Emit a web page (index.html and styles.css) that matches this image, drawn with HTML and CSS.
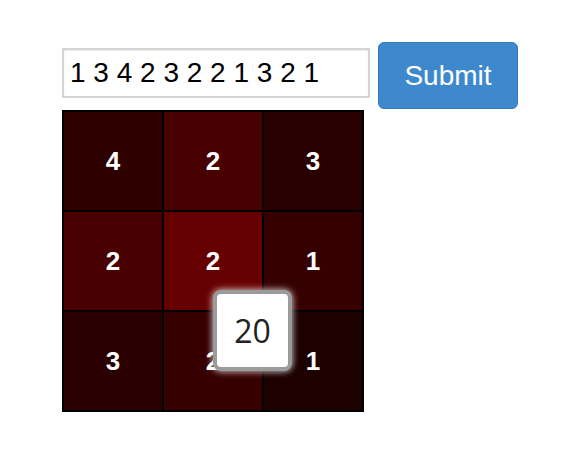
FILE: index.html
```html
<!DOCTYPE html>
<html>
<head>
<meta charset="utf-8">
<link rel="stylesheet" href="styles.css">
</head>
<body>
<div class="page">
  <div class="controls">
    <input class="seq-input" type="text" value="1 3 4 2 3 2 2 1 3 2 1">
    <button class="submit">Submit</button>
  </div>
  <div class="board">
    <div class="grid">
      <div class="cell c1">4</div>
      <div class="cell c2">2</div>
      <div class="cell c3">3</div>
      <div class="cell c4">2</div>
      <div class="cell c5">2</div>
      <div class="cell c6">1</div>
      <div class="cell c7">3</div>
      <div class="cell c8">2</div>
      <div class="cell c9">1</div>
    </div>
    <div class="tooltip">20</div>
  </div>
</div>
</body>
</html>
```
FILE: styles.css
```css
html, body {
  margin: 0;
  padding: 0;
  background: #fff;
}
.page {
  padding: 42px 0 0 62px;
  font-family: "Liberation Sans", Arial, sans-serif;
}
.controls {
  display: flex;
  align-items: flex-start;
  gap: 8px;
}
.seq-input {
  box-sizing: border-box;
  margin: 6px 0 0 0;
  width: 308px;
  height: 50px;
  border: 2px solid #d4d4d4;
  box-shadow: inset 0 1px 2px rgba(0,0,0,0.08);
  padding: 0 6px;
  font-family: "Liberation Sans", Arial, sans-serif;
  font-size: 28px;
  color: #000;
  outline: none;
}
.submit {
  box-sizing: border-box;
  width: 140px;
  height: 67px;
  background: #3e88cd;
  border: 1px solid #3579bb;
  border-radius: 6px;
  color: #fff;
  font-family: "Liberation Sans", Arial, sans-serif;
  font-size: 28px;
  padding: 0;
}
.board {
  position: relative;
  margin-top: 1px;
  width: 302px;
}
.grid {
  display: grid;
  grid-template-columns: repeat(3, 100px);
  grid-template-rows: repeat(3, 100px);
  border: 1px solid #000;
  background: #000;
}
.cell {
  box-sizing: border-box;
  border: 1px solid #000;
  display: flex;
  align-items: center;
  justify-content: center;
  color: #fff;
  font-weight: bold;
  font-size: 26px;
}
.c1 { background: #2f0000; }
.c2 { background: #480000; }
.c3 { background: #290000; }
.c4 { background: #490000; }
.c5 { background: #660000; }
.c6 { background: #370000; }
.c7 { background: #2b0000; }
.c8 { background: #370000; }
.c9 { background: #1d0000; }
.tooltip {
  position: absolute;
  left: 151px;
  top: 180px;
  box-sizing: border-box;
  width: 79px;
  height: 81px;
  background: #fff;
  border: 4px solid #9b9b9b;
  border-radius: 8px;
  box-shadow: 0 0 6px 1px rgba(255,255,255,0.7);
  display: flex;
  align-items: center;
  justify-content: center;
  font-family: "Open Sans", "DejaVu Sans", sans-serif;
  font-size: 32px;
  color: #222;
}
```
